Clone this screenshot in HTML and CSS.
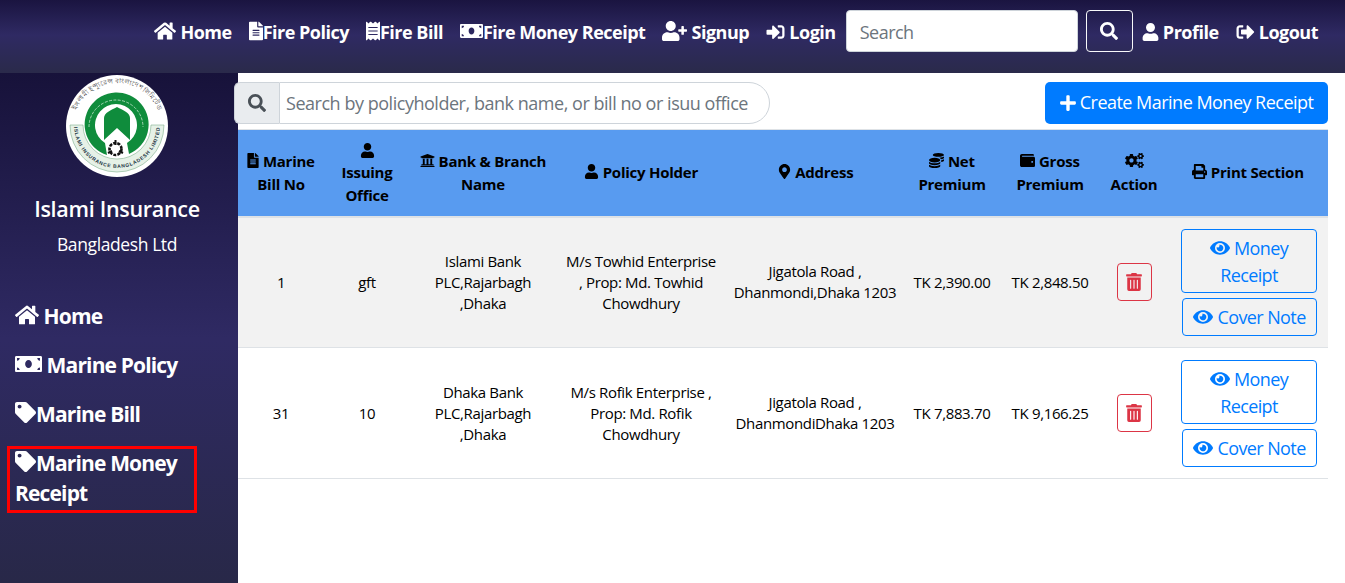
FILE: index.html
```html
<!DOCTYPE html>
<html lang="en">
<head>
<meta charset="utf-8">
<title>Marine Money Receipt</title>
<link rel="stylesheet" href="styles.css">
</head>
<body>
<svg class="defs" width="0" height="0" aria-hidden="true">
  <symbol id="home" viewBox="0 0 576 512"><path d="M280.37 148.26L96 300.11V464a16 16 0 0 0 16 16l112.06-.29a16 16 0 0 0 15.92-16V368a16 16 0 0 1 16-16h64a16 16 0 0 1 16 16v95.64a16 16 0 0 0 16 16.05L464 480a16 16 0 0 0 16-16V300L295.67 148.26a12.19 12.19 0 0 0-15.3 0zM571.6 251.47L488 182.56V44.05a12 12 0 0 0-12-12h-56a12 12 0 0 0-12 12v72.61L318.47 43a48 48 0 0 0-61 0L4.34 251.47a12 12 0 0 0-1.6 16.9l25.5 31A12 12 0 0 0 45.15 301l235.22-193.74a12.19 12.19 0 0 1 15.3 0L530.9 301a12 12 0 0 0 16.9-1.6l25.5-31a12 12 0 0 0-1.7-16.93z"/></symbol>
  <symbol id="search" viewBox="0 0 512 512"><path d="M505 442.7L405.3 343c-4.5-4.5-10.6-7-17-7H372c27.6-35.3 44-79.7 44-128C416 93.1 322.9 0 208 0S0 93.1 0 208s93.1 208 208 208c48.3 0 92.7-16.4 128-44v16.3c0 6.4 2.5 12.5 7 17l99.7 99.7c9.4 9.4 24.6 9.4 33.9 0l28.3-28.3c9.4-9.4 9.4-24.6.1-34zM208 336c-70.7 0-128-57.2-128-128 0-70.7 57.2-128 128-128 70.7 0 128 57.2 128 128 0 70.7-57.2 128-128 128z"/></symbol>
  <symbol id="user" viewBox="0 0 448 512"><path d="M224 256c70.7 0 128-57.3 128-128S294.7 0 224 0 96 57.3 96 128s57.3 128 128 128zm89.6 32h-16.7c-22.2 10.2-46.9 16-72.9 16s-50.6-5.8-72.9-16h-16.7C60.2 288 0 348.2 0 422.4V464c0 26.5 21.5 48 48 48h352c26.5 0 48-21.5 48-48v-41.6c0-74.2-60.2-134.4-134.4-134.4z"/></symbol>
  <symbol id="user-plus" viewBox="0 0 640 512"><path d="M624 208h-64v-64c0-8.8-7.2-16-16-16h-32c-8.8 0-16 7.2-16 16v64h-64c-8.8 0-16 7.2-16 16v32c0 8.8 7.2 16 16 16h64v64c0 8.8 7.2 16 16 16h32c8.8 0 16-7.2 16-16v-64h64c8.8 0 16-7.2 16-16v-32c0-8.8-7.2-16-16-16zm-400 48c70.7 0 128-57.3 128-128S294.7 0 224 0 96 57.3 96 128s57.3 128 128 128zm89.6 32h-16.7c-22.2 10.2-46.9 16-72.9 16s-50.6-5.8-72.9-16h-16.7C60.2 288 0 348.2 0 422.4V464c0 26.5 21.5 48 48 48h352c26.5 0 48-21.5 48-48v-41.6c0-74.2-60.2-134.4-134.4-134.4z"/></symbol>
  <symbol id="sign-in" viewBox="0 0 512 512"><path d="M416 448h-84c-6.6 0-12-5.4-12-12v-40c0-6.6 5.4-12 12-12h84c17.7 0 32-14.3 32-32V160c0-17.7-14.3-32-32-32h-84c-6.6 0-12-5.4-12-12V76c0-6.6 5.4-12 12-12h84c53 0 96 43 96 96v192c0 53-43 96-96 96zm-47-201L201 79c-15-15-41-4.5-41 17v96H24c-13.3 0-24 10.7-24 24v96c0 13.3 10.7 24 24 24h136v96c0 21.5 26 32 41 17l168-168c9.3-9.4 9.3-24.6 0-34z"/></symbol>
  <symbol id="sign-out" viewBox="0 0 512 512"><path d="M497 273L329 441c-15 15-41 4.5-41-17v-96H152c-13.3 0-24-10.7-24-24v-96c0-13.3 10.7-24 24-24h136V88c0-21.4 25.9-32 41-17l168 168c9.3 9.4 9.3 24.6 0 34zM192 436v-40c0-6.6-5.4-12-12-12H96c-17.7 0-32-14.3-32-32V160c0-17.7 14.3-32 32-32h84c6.6 0 12-5.4 12-12V76c0-6.6-5.4-12-12-12H96c-53 0-96 43-96 96v192c0 53 43 96 96 96h84c6.6 0 12-5.4 12-12z"/></symbol>
  <symbol id="file" viewBox="0 0 384 512"><path d="M224 136V0H24C10.7 0 0 10.7 0 24v464c0 13.3 10.7 24 24 24h336c13.3 0 24-10.7 24-24V160H248c-13.2 0-24-10.8-24-24zm64 236c0 6.6-5.4 12-12 12H108c-6.6 0-12-5.4-12-12v-8c0-6.6 5.4-12 12-12h168c6.6 0 12 5.4 12 12v8zm0-64c0 6.6-5.4 12-12 12H108c-6.6 0-12-5.4-12-12v-8c0-6.6 5.4-12 12-12h168c6.6 0 12 5.4 12 12v8zm0-72v8c0 6.6-5.4 12-12 12H108c-6.6 0-12-5.4-12-12v-8c0-6.6 5.4-12 12-12h168c6.6 0 12 5.4 12 12zm96-114.1v6.1H256V0h6.1c6.4 0 12.5 2.5 17 7l97.9 98c4.5 4.5 7 10.6 7 16.9z"/></symbol>
  <symbol id="receipt" viewBox="0 0 384 512"><path d="M358.4 3.2L320 48 265.6 3.2a15.9 15.9 0 0 0-19.2 0L192 48 137.6 3.2a15.9 15.9 0 0 0-19.2 0L64 48 25.6 3.2C15-4.7 0 2.8 0 16v480c0 13.2 15 20.7 25.6 12.8L64 464l54.4 44.8a15.9 15.9 0 0 0 19.2 0L192 464l54.4 44.8a15.9 15.9 0 0 0 19.2 0L320 464l38.4 44.8c10.5 7.9 25.6.4 25.6-12.8V16c0-13.2-15-20.7-25.6-12.8zM320 360c0 4.4-3.6 8-8 8H72c-4.4 0-8-3.6-8-8v-16c0-4.4 3.6-8 8-8h240c4.4 0 8 3.6 8 8v16zm0-96c0 4.4-3.6 8-8 8H72c-4.4 0-8-3.6-8-8v-16c0-4.4 3.6-8 8-8h240c4.4 0 8 3.6 8 8v16zm0-96c0 4.4-3.6 8-8 8H72c-4.4 0-8-3.6-8-8v-16c0-4.4 3.6-8 8-8h240c4.4 0 8 3.6 8 8v16z"/></symbol>
  <symbol id="money" viewBox="0 0 640 512"><path d="M608 64H32C14.33 64 0 78.33 0 96v320c0 17.67 14.33 32 32 32h576c17.67 0 32-14.33 32-32V96c0-17.67-14.33-32-32-32zM48 400v-64c35.35 0 64 28.65 64 64H48zm0-224v-64h64c0 35.35-28.65 64-64 64zm272 176c-44.19 0-80-42.99-80-96 0-53.02 35.82-96 80-96s80 42.98 80 96c0 53.03-35.83 96-80 96zm272 48h-64c0-35.35 28.65-64 64-64v64zm0-224c-35.35 0-64-28.65-64-64h64v64z"/></symbol>
  <symbol id="tag" viewBox="0 0 512 512"><path d="M0 252.118V48C0 21.49 21.49 0 48 0h204.118a48 48 0 0 1 33.941 14.059l211.882 211.882c18.745 18.745 18.745 49.137 0 67.882L293.823 497.941c-18.745 18.745-49.137 18.745-67.882 0L14.059 286.059A48 48 0 0 1 0 252.118zM112 64c-26.51 0-48 21.49-48 48s21.49 48 48 48 48-21.49 48-48-21.49-48-48-48z"/></symbol>
  <symbol id="bank" viewBox="0 0 512 512"><path d="M496 128v16a8 8 0 0 1-8 8h-24v12c0 6.627-5.373 12-12 12H60c-6.627 0-12-5.373-12-12v-12H24a8 8 0 0 1-8-8v-16a8 8 0 0 1 4.941-7.392l232-88a7.996 7.996 0 0 1 6.118 0l232 88A8 8 0 0 1 496 128zm-24 304H40c-13.255 0-24 10.745-24 24v16a8 8 0 0 0 8 8h464a8 8 0 0 0 8-8v-16c0-13.255-10.745-24-24-24zM96 192v192H60c-6.627 0-12 5.373-12 12v20h416v-20c0-6.627-5.373-12-12-12h-36V192h-64v192h-64V192h-64v192h-64V192H96z"/></symbol>
  <symbol id="marker" viewBox="0 0 384 512"><path d="M172.268 501.67C26.97 291.031 0 269.413 0 192 0 85.961 85.961 0 192 0s192 85.961 192 192c0 77.413-26.97 99.031-172.268 309.67-9.535 13.774-29.93 13.773-39.464 0zM192 272c44.183 0 80-35.817 80-80s-35.817-80-80-80-80 35.817-80 80 35.817 80 80 80z"/></symbol>
  <symbol id="coins" viewBox="0 0 512 512"><path d="M0 405.3V448c0 35.3 86 64 192 64s192-28.7 192-64v-42.7C342.7 434.4 267.2 448 192 448S41.3 434.4 0 405.3zM320 128c106 0 192-28.7 192-64S426 0 320 0 128 28.7 128 64s86 64 192 64zM0 300.4V352c0 35.3 86 64 192 64s192-28.7 192-64v-51.6c-41.3 34-116.9 51.6-192 51.6S41.3 334.4 0 300.4zm416 11c57.3-11.1 96-31.7 96-55.4v-42.7c-23.2 16.4-57.3 27.6-96 34.5v63.6zM192 160C86 160 0 195.8 0 240s86 80 192 80 192-35.8 192-80-86-80-192-80zm219.3 56.3c60-10.8 100.7-32 100.7-56.3v-42.7c-35.5 25.1-96.5 38.6-160.7 41.8 29.5 14.3 51.2 33.5 60 57.2z"/></symbol>
  <symbol id="wallet" viewBox="0 0 512 512"><path d="M461.2 128H80c-8.84 0-16-7.16-16-16s7.16-16 16-16h384c8.84 0 16-7.16 16-16 0-26.51-21.49-48-48-48H64C28.65 32 0 60.65 0 96v320c0 35.35 28.65 64 64 64h397.2c28.02 0 50.8-21.53 50.8-48V176c0-26.47-22.78-48-50.8-48zM416 336c-17.67 0-32-14.33-32-32s14.33-32 32-32 32 14.33 32 32-14.33 32-32 32z"/></symbol>
  <symbol id="cogs" viewBox="0 0 640 512"><path d="M512.1 191l-8.2 14.3c-3 5.3-9.4 7.5-15.1 5.4-11.8-4.4-22.6-10.7-32.1-18.6-4.6-3.8-5.8-10.5-2.8-15.7l8.2-14.3c-6.9-8-12.3-17.3-15.9-27.4h-16.5c-6 0-11.2-4.3-12.2-10.3-2-12-2.1-24.6 0-37.1 1-6 6.2-10.4 12.2-10.4h16.5c3.6-10.1 9-19.4 15.9-27.4l-8.2-14.3c-3-5.2-1.9-11.9 2.8-15.7 9.5-7.9 20.4-14.2 32.1-18.6 5.7-2.1 12.1.1 15.1 5.4l8.2 14.3c10.5-1.9 21.2-1.9 31.7 0L552 6.3c3-5.3 9.4-7.5 15.1-5.4 11.8 4.4 22.6 10.7 32.1 18.6 4.6 3.8 5.8 10.5 2.8 15.7l-8.2 14.3c6.9 8 12.3 17.3 15.9 27.4h16.5c6 0 11.2 4.3 12.2 10.3 2 12 2.1 24.6 0 37.1-1 6-6.2 10.4-12.2 10.4h-16.5c-3.6 10.1-9 19.4-15.9 27.4l8.2 14.3c3 5.2 1.9 11.9-2.8 15.7-9.5 7.9-20.4 14.2-32.1 18.6-5.7 2.1-12.1-.1-15.1-5.4l-8.2-14.3c-10.4 1.9-21.2 1.9-31.7 0zm-10.5-58.8c38.5 29.6 82.4-14.3 52.8-52.8-38.5-29.7-82.4 14.3-52.8 52.8zM386.3 286.1l33.7 16.8c10.1 5.8 14.5 18.1 10.5 29.1-8.9 24.2-26.4 46.4-42.6 65.8-7.4 8.9-20.2 11.1-30.3 5.3l-29.1-16.8c-16 13.7-34.6 24.6-54.9 31.7v33.6c0 11.6-8.3 21.6-19.7 23.6-24.6 4.2-50.4 4.4-75.9 0-11.5-2-20-11.9-20-23.6V418c-20.3-7.2-38.9-18-54.9-31.7L74 403c-10 5.8-22.9 3.6-30.3-5.3-16.2-19.4-33.3-41.6-42.2-65.7-4-10.9.4-23.2 10.5-29.1l33.3-16.8c-3.9-20.9-3.9-42.4 0-63.4L12 205.8c-10.1-5.8-14.6-18.1-10.5-29 8.9-24.2 26-46.4 42.2-65.8 7.4-8.9 20.2-11.1 30.3-5.3l29.1 16.8c16-13.7 34.6-24.6 54.9-31.7V57.1c0-11.5 8.2-21.5 19.6-23.5 24.6-4.2 50.5-4.4 76-.1 11.5 2 20 11.9 20 23.6v33.6c20.3 7.2 38.9 18 54.9 31.7l29.1-16.8c10-5.8 22.9-3.6 30.3 5.3 16.2 19.4 33.2 41.6 42.1 65.8 4 10.9.1 23.2-10 29.1l-33.7 16.8c3.9 21 3.9 42.5 0 63.5zm-117.6 21.1c59.2-77-28.7-164.9-105.7-105.7-59.2 77 28.7 164.9 105.7 105.7zm243.4 182.7l-8.2 14.3c-3 5.3-9.4 7.5-15.1 5.4-11.8-4.4-22.6-10.7-32.1-18.6-4.6-3.8-5.8-10.5-2.8-15.7l8.2-14.3c-6.9-8-12.3-17.3-15.9-27.4h-16.5c-6 0-11.2-4.3-12.2-10.3-2-12-2.1-24.6 0-37.1 1-6 6.2-10.4 12.2-10.4h16.5c3.6-10.1 9-19.4 15.9-27.4l-8.2-14.3c-3-5.2-1.9-11.9 2.8-15.7 9.5-7.9 20.4-14.2 32.1-18.6 5.7-2.1 12.1.1 15.1 5.4l8.2 14.3c10.5-1.9 21.2-1.9 31.7 0l8.2-14.3c3-5.3 9.4-7.5 15.1-5.4 11.8 4.4 22.6 10.7 32.1 18.6 4.6 3.8 5.8 10.5 2.8 15.7l-8.2 14.3c6.9 8 12.3 17.3 15.9 27.4h16.5c6 0 11.2 4.3 12.2 10.3 2 12 2.1 24.6 0 37.1-1 6-6.2 10.4-12.2 10.4h-16.5c-3.6 10.1-9 19.4-15.9 27.4l8.2 14.3c3 5.2 1.9 11.9-2.8 15.7-9.5 7.9-20.4 14.2-32.1 18.6-5.7 2.1-12.1-.1-15.1-5.4l-8.2-14.3c-10.4 1.9-21.2 1.9-31.7 0zM501.6 431c38.5 29.6 82.4-14.3 52.8-52.8-38.5-29.6-82.4 14.3-52.8 52.8z"/></symbol>
  <symbol id="print" viewBox="0 0 512 512"><path d="M448 192V77.25c0-8.49-3.37-16.62-9.37-22.63L393.37 9.37c-6-6-14.14-9.37-22.63-9.37H96C78.33 0 64 14.33 64 32v160c-35.35 0-64 28.65-64 64v112c0 8.84 7.16 16 16 16h48v96c0 17.67 14.33 32 32 32h320c17.67 0 32-14.33 32-32v-96h48c8.84 0 16-7.16 16-16V256c0-35.35-28.65-64-64-64zm-64 256H128v-96h256v96zm0-224H128V64h192v48c0 8.84 7.16 16 16 16h48v96zm48 72c-13.25 0-24-10.75-24-24 0-13.26 10.75-24 24-24s24 10.74 24 24c0 13.25-10.75 24-24 24z"/></symbol>
  <symbol id="eye" viewBox="0 0 576 512"><path d="M572.52 241.4C518.29 135.59 410.93 64 288 64S57.68 135.64 3.48 241.41a32.35 32.35 0 0 0 0 29.19C57.71 376.41 165.07 448 288 448s230.32-71.64 284.52-177.41a32.35 32.35 0 0 0 0-29.19zM288 400a144 144 0 1 1 144-144 143.93 143.93 0 0 1-144 144zm0-240a95.31 95.31 0 0 0-25.31 3.79 47.85 47.85 0 0 1-66.9 66.9A95.78 95.78 0 1 0 288 160z"/></symbol>
  <symbol id="trash" viewBox="0 0 448 512"><path d="M32 464a48 48 0 0 0 48 48h288a48 48 0 0 0 48-48V128H32zm272-256a16 16 0 0 1 32 0v224a16 16 0 0 1-32 0zm-96 0a16 16 0 0 1 32 0v224a16 16 0 0 1-32 0zm-96 0a16 16 0 0 1 32 0v224a16 16 0 0 1-32 0zM432 32H312l-9.4-18.7A24 24 0 0 0 281.1 0H166.8a23.72 23.72 0 0 0-21.4 13.3L136 32H16A16 16 0 0 0 0 48v32a16 16 0 0 0 16 16h416a16 16 0 0 0 16-16V48a16 16 0 0 0-16-16z"/></symbol>
  <symbol id="plus" viewBox="0 0 448 512"><path d="M416 208H272V64c0-17.67-14.33-32-32-32h-32c-17.67 0-32 14.33-32 32v144H32c-17.67 0-32 14.33-32 32v32c0 17.67 14.33 32 32 32h144v144c0 17.67 14.33 32 32 32h32c17.67 0 32-14.33 32-32V304h144c17.67 0 32-14.33 32-32v-32c0-17.67-14.33-32-32-32z"/></symbol>
</svg>

<header class="topbar">
  <a class="top-link"><svg class="ic w-home"><use href="#home"/></svg> Home</a>
  <a class="top-link"><svg class="ic w-file"><use href="#file"/></svg>Fire Policy</a>
  <a class="top-link"><svg class="ic w-file"><use href="#receipt"/></svg>Fire Bill</a>
  <a class="top-link"><svg class="ic w-money"><use href="#money"/></svg>Fire Money Receipt</a>
  <a class="top-link"><svg class="ic w-plus-user"><use href="#user-plus"/></svg> Signup</a>
  <a class="top-link"><svg class="ic w-sign"><use href="#sign-in"/></svg> Login</a>
  <form class="top-search">
    <input class="top-input" type="text" placeholder="Search">
    <button class="top-btn" type="button"><svg class="ic w-sq"><use href="#search"/></svg></button>
  </form>
  <a class="top-link"><svg class="ic w-user"><use href="#user"/></svg> Profile</a>
  <a class="top-link"><svg class="ic w-sign"><use href="#sign-out"/></svg> Logout</a>
</header>

<div class="layout">
  <aside class="sidebar">
    <svg class="logo" viewBox="0 0 102 102" role="img" aria-label="Islami Insurance Bangladesh Ltd logo">
      <defs>
        <path id="arc-top" d="M7 52A44 44 0 0 1 95 52"/>
        <path id="arc-bottom" d="M8 50A43 43 0 0 0 94 50"/>
      </defs>
      <circle cx="51" cy="51" r="51" fill="#fff"/>
      <text class="logo-bn"><textPath href="#arc-top" startOffset="50%" text-anchor="middle">ইসলামী ইন্স্যুরেন্স বাংলাদেশ লিমিটেড</textPath></text>
      <path d="M4 50A47 47 0 0 0 98 50H85A34 34 0 0 1 17 50Z" fill="#e6f1e7" stroke="#7fb08d" stroke-width=".6"/>
      <text class="logo-en"><textPath href="#arc-bottom" startOffset="50%" text-anchor="middle">ISLAMI INSURANCE BANGLADESH LIMITED</textPath></text>
      <path d="M41 80A32 32 0 1 1 63 79L61 68A21 21 0 1 0 39 68Z" fill="#0f8c3c"/>
      <path d="M23 52A27 27 0 0 1 77 52" fill="none" stroke="#dff0e3" stroke-width=".7" stroke-dasharray="3 1.4"/>
      <path d="M38 65V43C38 38 45 35 51 32C57 35 64 38 64 43V65L51 53Z" fill="#0f8c3c"/>
      <circle cx="49.5" cy="74" r="6" fill="none" stroke="#111" stroke-width="2.6" stroke-dasharray="3 1.2"/>
      <path d="M49.5 65V70M57 78L53 76M42 78L46 76" stroke="#111" stroke-width="2"/>
    </svg>
    <h1 class="brand">Islami Insurance</h1>
    <p class="brand-sub">Bangladesh Ltd</p>
    <nav class="side-nav">
      <a class="side-link"><svg class="ic s-home"><use href="#home"/></svg> Home</a>
      <a class="side-link"><svg class="ic s-money"><use href="#money"/></svg> Marine Policy</a>
      <a class="side-link"><svg class="ic s-tag"><use href="#tag"/></svg>Marine Bill</a>
      <a class="side-link is-active"><svg class="ic s-tag"><use href="#tag"/></svg>Marine Money Receipt</a>
    </nav>
  </aside>

  <main class="content">
    <div class="toolbar">
      <div class="table-search">
        <span class="search-addon"><svg class="ic w-addon"><use href="#search"/></svg></span>
        <input class="search-field" type="text" placeholder="Search by policyholder, bank name, or bill no or isuu office">
      </div>
      <button class="create-btn" type="button"><svg class="ic w-plus"><use href="#plus"/></svg> Create Marine Money Receipt</button>
    </div>

    <table class="data-table">
      <colgroup>
        <col class="c1"><col class="c2"><col class="c3"><col class="c4"><col class="c5"><col class="c6"><col class="c7"><col class="c8"><col class="c9">
      </colgroup>
      <thead>
        <tr>
          <th><svg class="ic h-ic h-file"><use href="#file"/></svg> Marine Bill No</th>
          <th><svg class="ic h-ic h-block"><use href="#user"/></svg> Issuing Office</th>
          <th><svg class="ic h-ic"><use href="#bank"/></svg> Bank &amp; Branch Name</th>
          <th><svg class="ic h-ic"><use href="#user"/></svg> Policy Holder</th>
          <th><svg class="ic h-ic"><use href="#marker"/></svg> Address</th>
          <th><svg class="ic h-ic"><use href="#coins"/></svg> Net Premium</th>
          <th><svg class="ic h-ic"><use href="#wallet"/></svg> Gross Premium</th>
          <th><svg class="ic h-ic h-wide"><use href="#cogs"/></svg> Action</th>
          <th><svg class="ic h-ic"><use href="#print"/></svg> Print Section</th>
        </tr>
      </thead>
      <tbody>
        <tr class="striped">
          <td>1</td>
          <td>gft</td>
          <td>Islami Bank PLC,Rajarbagh ,Dhaka</td>
          <td>M/s Towhid Enterprise , Prop: Md. Towhid Chowdhury</td>
          <td class="addr-cell">Jigatola Road , Dhanmondi,Dhaka 1203</td>
          <td>TK 2,390.00</td>
          <td>TK 2,848.50</td>
          <td><button class="del-btn" type="button" aria-label="Delete"><svg class="ic t-ic"><use href="#trash"/></svg></button></td>
          <td class="print-cell">
            <button class="out-btn out-wide" type="button"><svg class="ic e-ic"><use href="#eye"/></svg> Money Receipt</button>
            <button class="out-btn" type="button"><svg class="ic e-ic"><use href="#eye"/></svg> Cover Note</button>
          </td>
        </tr>
        <tr>
          <td>31</td>
          <td>10</td>
          <td>Dhaka Bank PLC,Rajarbagh ,Dhaka</td>
          <td>M/s Rofik Enterprise , Prop: Md. Rofik Chowdhury</td>
          <td class="addr-cell">Jigatola Road , DhanmondiDhaka 1203</td>
          <td>TK 7,883.70</td>
          <td>TK 9,166.25</td>
          <td><button class="del-btn" type="button" aria-label="Delete"><svg class="ic t-ic"><use href="#trash"/></svg></button></td>
          <td class="print-cell">
            <button class="out-btn out-wide" type="button"><svg class="ic e-ic"><use href="#eye"/></svg> Money Receipt</button>
            <button class="out-btn" type="button"><svg class="ic e-ic"><use href="#eye"/></svg> Cover Note</button>
          </td>
        </tr>
      </tbody>
    </table>
  </main>
</div>
</body>
</html>
```

FILE: styles.css
```css
* { box-sizing: border-box; }
html, body { margin: 0; height: 100%; }
body {
  font-family: "Open Sans", "Noto Sans", sans-serif;
  background: #fff;
  color: #000;
  overflow: hidden;
  height: 583px;
  display: flex;
  flex-direction: column;
}
.defs { position: absolute; }
.ic { fill: currentColor; display: inline-block; vertical-align: -2px; }

/* top bar */
.topbar {
  flex: 0 0 73px;
  height: 73px;
  padding: 10px 27px 21px 0;
  display: flex;
  justify-content: flex-end;
  align-items: center;
  gap: 17px;
  background: linear-gradient(180deg, #1a1440 0%, #2f2a63 48%, #2a2a4a 100%);
}
.top-link {
  padding-top: 2px;
  color: #fff;
  font-size: 18px;
  font-weight: 700;
  letter-spacing: -0.5px;
  white-space: nowrap;
}
.w-home { width: 22px; height: 20px; }
.w-file { width: 14px; height: 20px; }
.w-money { width: 23px; height: 20px; }
.w-plus-user { width: 25px; height: 20px; }
.w-sign { width: 19px; height: 18px; }
.w-sq { width: 18px; height: 18px; }
.w-user { width: 17px; height: 18px; }
.top-search { display: flex; gap: 8px; margin: 0 -8px 0 -7px; }
.top-input {
  width: 232px;
  height: 42px;
  padding: 2px 13px 0;
  font: 18px "Open Sans", sans-serif;
  letter-spacing: -0.5px;
  border: 1px solid #ced4da;
  border-radius: 4px;
}
.top-input::placeholder, .search-field::placeholder { color: #6c757d; opacity: 1; }
.top-btn {
  width: 47px;
  height: 42px;
  padding: 0;
  color: #fff;
  background: transparent;
  border: 1px solid #f8f9fa;
  border-radius: 4px;
}

/* layout */
.layout { flex: 1; display: flex; min-height: 0; }
.sidebar {
  flex: 0 0 238px;
  width: 238px;
  padding: 2px 0 0 7px;
  color: #fff;
  background: linear-gradient(180deg, #17123a 0%, #2f2a63 52%, #282848 100%);
}
.logo { display: block; width: 102px; height: 102px; margin: 0 0 0 59px; }
.logo-bn { font: 400 6.5px "Noto Sans", sans-serif; fill: #333; }
.logo-en { font: 700 5px "Liberation Sans", sans-serif; letter-spacing: .7px; fill: #234; }
.brand {
  margin: 17px 0 0;
  width: 220px;
  font-size: 21.5px;
  font-weight: 600;
  line-height: 30px;
  letter-spacing: -0.3px;
  text-align: center;
}
.brand-sub {
  margin: 8px 0 0;
  width: 220px;
  font-size: 17.5px;
  line-height: 24px;
  letter-spacing: -0.4px;
  text-align: center;
}
.side-nav { margin-top: 43px; display: flex; flex-direction: column; gap: 12px; width: 190px; }
.side-link {
  display: block;
  padding: 2px 8px 5px;
  color: #fff;
  font-size: 21px;
  font-weight: 700;
  line-height: 30px;
  letter-spacing: -0.85px;
}
.is-active { outline: 3px solid #f00; outline-offset: -3px; }
.s-home { width: 24px; height: 22px; vertical-align: -2px; }
.s-money { width: 27px; height: 24px; vertical-align: -3px; }
.s-tag { width: 21px; height: 21px; vertical-align: -1px; }

/* content */
.content { flex: 1; min-width: 0; padding: 9px 17px 0 0; }
.toolbar { display: flex; justify-content: space-between; height: 42px; margin-bottom: 5px; }
.table-search { display: flex; width: 536px; height: 42px; margin-left: -4px; }
.search-addon {
  flex: 0 0 45px;
  display: flex;
  align-items: center;
  justify-content: center;
  color: #495057;
  background: #e9ecef;
  border: 1px solid #ced4da;
  border-right: 0;
  border-radius: 6px 0 0 6px;
}
.w-addon { width: 18px; height: 18px; }
.search-field {
  flex: 1;
  min-width: 0;
  padding: 0 6px;
  font: 18px "Open Sans", sans-serif;
  letter-spacing: -0.47px;
  border: 1px solid #ced4da;
  border-radius: 0 21px 21px 0;
}
.create-btn {
  width: 283px;
  height: 42px;
  padding: 0 0 2px;
  color: #fff;
  background: #007bff;
  border: 0;
  border-radius: 5px;
  font: 18px "Open Sans", sans-serif;
  letter-spacing: -0.52px;
  white-space: nowrap;
}
.w-plus { width: 16px; height: 18px; vertical-align: -3px; }

/* table */
.data-table {
  width: 1090px;
  table-layout: fixed;
  border-collapse: collapse;
  font-size: 15px;
  letter-spacing: -0.35px;
  line-height: 21px;
  text-align: center;
  border-top: 1px solid #dee2e6;
}
.c1, .c2 { width: 86px; }
.c3 { width: 146px; }
.c4 { width: 170px; }
.c5 { width: 178px; }
.c6 { width: 96px; }
.c7 { width: 100px; }
.c8 { width: 68px; }
.c9 { width: 160px; }
.data-table th {
  height: 87px;
  padding: 0 8px;
  background: #589bf0;
  font-size: 15px;
  font-weight: 700;
  line-height: 23px;
  letter-spacing: -0.25px;
  vertical-align: middle;
  border-bottom: 2px solid #dee2e6;
}
.h-ic { width: 15px; height: 15px; vertical-align: -1px; }
.h-file { width: 12px; }
.h-block { display: block; margin: 4px auto 3px; }
.h-wide { width: 19px; }
.data-table td {
  height: 131px;
  padding: 0 8px;
  vertical-align: middle;
  border-bottom: 1px solid #dee2e6;
}
.data-table td.addr-cell { padding: 0 4px; }
.striped td { background: #f2f2f2; }
.del-btn {
  width: 35px;
  height: 38px;
  padding: 0;
  color: #dc3545;
  background: transparent;
  border: 1px solid #dc3545;
  border-radius: 4px;
}
.t-ic { width: 16px; height: 18px; vertical-align: -3px; }
.data-table td.print-cell { padding: 0 11px 0 13px; }
.out-btn {
  display: block;
  width: 135px;
  min-height: 38px;
  margin: 5px 0 0 auto;
  padding: 5px 10px 3px;
  color: #007bff;
  background: transparent;
  border: 1px solid #007bff;
  border-radius: 4px;
  font: 18px/27px "Open Sans", sans-serif;
  letter-spacing: -0.6px;
}
.out-wide { width: 136px; margin-top: 0; }
.e-ic { width: 20px; height: 18px; vertical-align: -2px; }
```
